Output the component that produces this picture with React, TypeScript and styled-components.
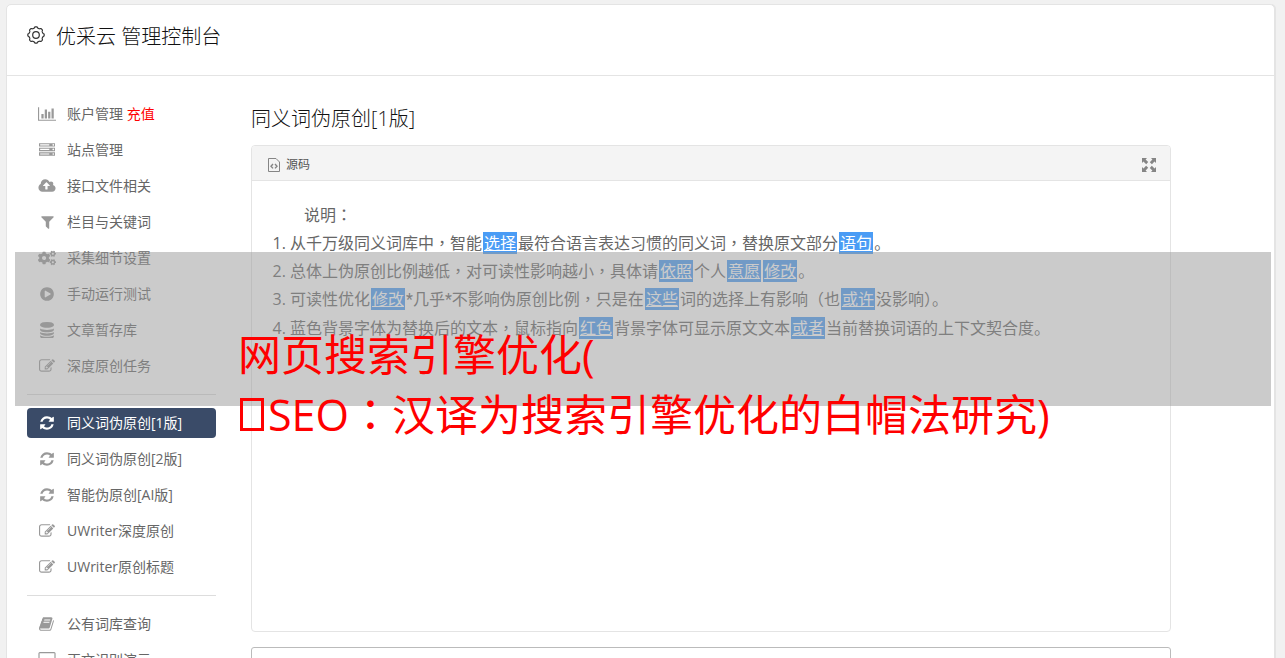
import React from 'react';
import styled, { createGlobalStyle } from 'styled-components';
import { FaCogs } from 'react-icons/fa';

const sans = '"Open Sans", "Noto Sans CJK SC", sans-serif';

const GlobalStyle = createGlobalStyle`
  * { box-sizing: border-box; }
  body {
    margin: 0;
    background: #f1f1f1;
    color: #666;
    font: 14px/30px ${sans};
  }
`;

/* ---------- icons ---------- */

const glyphs = {
  chart: {
    box: '0 0 2048 1792', width: 18,
    d: 'M640 896v512h-256v-512h256zm384-512v1024h-256v-1024h256zm1024 1152v128h-2048v-1536h128v1408h1920zm-640-896v768h-256v-768h256zm384-384v1152h-256v-1152h256z',
  },
  server: {
    box: '0 0 1792 1792', width: 16,
    d: 'M128 1408h1024v-128h-1024v128zm0-512h1024v-128h-1024v128zm1568 448q0-40-28-68t-68-28-68 28-28 68 28 68 68 28 68-28 28-68zm-1568-960h1024v-128h-1024v128zm1568 448q0-40-28-68t-68-28-68 28-28 68 28 68 68 28 68-28 28-68zm0-512q0-40-28-68t-68-28-68 28-28 68 28 68 68 28 68-28 28-68zm96 832v384h-1792v-384h1792zm0-512v384h-1792v-384h1792zm0-512v384h-1792v-384h1792z',
  },
  upload: {
    box: '-64 0 1920 1792', width: 18,
    d: 'M1216 864q0-14-9-23l-352-352q-9-9-23-9t-23 9l-351 351q-10 12-10 24 0 14 9 23t23 9h224v352q0 13 9.5 22.5t22.5 9.5h192q13 0 22.5-9.5t9.5-22.5v-352h224q13 0 22.5-9.5t9.5-22.5zm640 288q0 159-112.5 271.5t-271.5 112.5h-1088q-185 0-316.5-131.5t-131.5-316.5q0-130 70-240t188-165q-2-30-2-43 0-212 150-362t362-150q156 0 285.5 87t188.5 231q71-62 166-62 106 0 181 75t75 181q0 76-41 138 130 31 213.5 135.5t83.5 238.5z',
  },
  filter: {
    box: '0 0 1408 1792', width: 13,
    d: 'M1403 295q17 41-14 70l-493 493v742q0 42-39 59-13 5-25 5-27 0-45-19l-256-256q-19-19-19-45v-486l-493-493q-31-29-14-70 17-39 59-39h1280q42 0 59 39z',
  },
  play: {
    box: '0 0 1536 1792', width: 14,
    d: 'M768 128q209 0 385.5 103t279.5 279.5 103 385.5-103 385.5-279.5 279.5-385.5 103-385.5-103-279.5-279.5-103-385.5 103-385.5 279.5-279.5 385.5-103zm384 823q32-18 32-55t-32-55l-544-320q-31-19-64-1-32 19-32 56v640q0 37 32 56 16 8 32 8 17 0 32-9z',
  },
  database: {
    box: '0 0 1536 1792', width: 14,
    d: 'M768 896q237 0 443-43t325-127v170q0 69-103 128t-280 93.5-385 34.5-385-34.5-280-93.5-103-128v-170q119 84 325 127t443 43zm0 768q237 0 443-43t325-127v170q0 69-103 128t-280 93.5-385 34.5-385-34.5-280-93.5-103-128v-170q119 84 325 127t443 43zm0-384q237 0 443-43t325-127v170q0 69-103 128t-280 93.5-385 34.5-385-34.5-280-93.5-103-128v-170q119 84 325 127t443 43zm0-1280q208 0 385 34.5t280 93.5 103 128v128q0 69-103 128t-280 93.5-385 34.5-385-34.5-280-93.5-103-128v-128q0-69 103-128t280-93.5 385-34.5z',
  },
  edit: {
    box: '0 0 1792 1792', width: 16,
    d: 'M888 1184l116-116-152-152-116 116v56h96v96h56zm440-720q-16-16-33 1l-350 350q-17 17-1 33t33-1l350-350q17-17 1-33zm80 594v190q0 119-84.5 203.5t-203.5 84.5h-832q-119 0-203.5-84.5t-84.5-203.5v-832q0-119 84.5-203.5t203.5-84.5h832q63 0 117 25 15 7 18 23 3 17-9 29l-49 49q-14 14-32 8-23-6-45-6h-832q-66 0-113 47t-47 113v832q0 66 47 113t113 47h832q66 0 113-47t47-113v-126q0-13 9-22l64-64q15-15 35-7t20 29zm-96-738l288 288-672 672h-288v-288zm444 132l-92 92-288-288 92-92q28-28 68-28t68 28l152 152q28 28 28 68t-28 68z',
  },
  refresh: {
    box: '0 0 1536 1792', width: 14,
    d: 'M1511 1056q0 5-1 7-64 268-268 434.5t-478 166.5q-146 0-282.5-55t-243.5-157l-129 129q-19 19-45 19t-45-19-19-45v-448q0-26 19-45t45-19h448q26 0 45 19t19 45-19 45l-137 137q71 66 161 102t187 36q134 0 250-65t186-179q11-17 53-117 8-23 30-23h192q13 0 22.5 9.5t9.5 22.5zm25-800v448q0 26-19 45t-45 19h-448q-26 0-45-19t-19-45 19-45l138-138q-148-137-349-137-134 0-250 65t-186 179q-11 17-53 117-8 23-30 23h-199q-13 0-22.5-9.5t-9.5-22.5v-7q65-268 270-434.5t480-166.5q146 0 284 55.5t245 156.5l130-129q19-19 45-19t45 19 19 45z',
  },
  book: {
    box: '0 0 1792 1792', width: 16,
    d: 'M1639 478q40 57 18 129l-275 906q-19 64-76.5 107.5t-122.5 43.5h-923q-77 0-148.5-53.5t-99.5-131.5q-24-67-2-127 0-4 3-27t4-37q1-8-3-21.5t-3-19.5q2-11 8-21t16.5-23.5 16.5-23.5q23-38 45-91.5t30-91.5q3-10 .5-30t-.5-28q3-11 17-28t17-23q21-36 42-92t25-90q1-9-2.5-32t.5-28q4-13 22-30.5t22-22.5q19-26 42.5-84.5t27.5-96.5q1-8-3-25.5t-2-26.5q2-8 9-18t18-23 17-21q8-12 16.5-30.5t15-35 16-36 19.5-32 26.5-23.5 36-11.5 47.5 5.5l-1 3q38-9 51-9h761q74 0 114 56t18 130l-274 906q-36 119-71.5 153.5t-128.5 34.5h-869q-27 0-38 15-11 16-1 43 24 70 144 70h923q29 0 56-15.5t35-41.5l300-987q7-22 5-57 38 15 59 43zm-1064 2q-4 13 2 22.5t20 9.5h608q13 0 25.5-9.5t16.5-22.5l21-64q4-13-2-22.5t-20-9.5h-608q-13 0-25.5 9.5t-16.5 22.5zm-83 256q-4 13 2 22.5t20 9.5h608q13 0 25.5-9.5t16.5-22.5l21-64q4-13-2-22.5t-20-9.5h-608q-13 0-25.5 9.5t-16.5 22.5z',
  },
  desktop: {
    box: '0 0 1920 1792', width: 18,
    d: 'M1792 992v-832q0-13-9.500-22.500t-22.500-9.500h-1600q-13 0-22.500 9.500t-9.500 22.500v832q0 13 9.500 22.500t22.500 9.500h1600q13 0 22.500-9.500t9.500-22.500zm128-832v1088q0 66-47 113t-113 47h-544q0 37 16 77.500t32 71 16 43.500q0 26-19 45t-45 19h-512q-26 0-45-19t-19-45q0-14 16-44t32-70 16-78h-544q-66 0-113-47t-47-113v-1088q0-66 47-113t113-47h1600q66 0 113 47t47 113z',
  },
};

type IconName = keyof typeof glyphs | 'cogs';

function Icon({ name }: { name: IconName }) {
  if (name === 'cogs') return <FaCogs size={18} aria-hidden />;
  const { box, width, d } = glyphs[name];
  return (
    <svg viewBox={box} width={width} height={16} fill="currentColor" aria-hidden>
      <path d={d} />
    </svg>
  );
}

function gearOutline(teeth: number) {
  const points: string[] = [];
  for (let i = 0; i <= 180; i++) {
    const a = (i / 180) * Math.PI * 2;
    const r = 7.6 + 0.6 * Math.tanh(2 * Math.cos(teeth * a));
    points.push(`${(9 + r * Math.sin(a)).toFixed(2)} ${(9 - r * Math.cos(a)).toFixed(2)}`);
  }
  return `M${points.join('L')}Z`;
}

function GearIcon() {
  return (
    <svg width="18" height="18" viewBox="0 0 18 18" fill="none" stroke="#333" strokeWidth="1.2" aria-hidden>
      <path d={gearOutline(8)} />
      <circle cx="9" cy="9" r="3.3" />
    </svg>
  );
}

function SourceIcon() {
  return (
    <svg width="12" height="14" viewBox="0 0 12 14" fill="none" stroke="#858585" aria-hidden>
      <path d="M.5 .5H8L11.500 4V13.500H.5Z" />
      <path d="M5 6L3 8.200L5 10.400M7 6L9 8.200L7 10.400" strokeWidth="1.400" />
    </svg>
  );
}

function ExpandIcon() {
  return (
    <svg width="14" height="14" viewBox="0 0 14 14" fill="#858585" aria-hidden>
      {[0, 90, 180, 270].map((turn) => (
        <path key={turn} transform={`rotate(${turn} 7 7)`} d="M0 0H5L3.600 1.500L6.200 4.100L4.200 6.200L1.500 3.600L0 5Z" />
      ))}
    </svg>
  );
}

/* ---------- page frame ---------- */

const Page = styled.div`
  position: relative;
  height: 100vh;
  overflow: hidden;
  padding: 4px 10px 0 6px;
`;

const Panel = styled.div`
  background: #fff;
  border: 1px solid #e4e4e4;
  border-radius: 5px;
  box-shadow: 1px 0 0 #e4e4e4;
`;

const Header = styled.header`
  display: flex;
  align-items: center;
  gap: 11px;
  height: 71px;
  padding: 0 20px 10px;
  border-bottom: 1px solid #e4e4e4;
`;

const Heading = styled.h1`
  margin: 0;
  padding-top: 3px;
  color: #111;
  font-size: 20px;
  font-weight: 300;
  line-height: 30px;
`;

const Columns = styled.div`
  display: flex;
  gap: 35px;
  padding: 23px 103px 20px 20px;
`;

/* ---------- sidebar ---------- */

const Sidebar = styled.nav`
  flex: 0 0 189px;
`;

const Menu = styled.ul`
  display: flex;
  flex-direction: column;
  gap: 6px;
  margin: 0;
  padding: 0;
  list-style: none;

  & + & {
    margin-top: 13px;
    padding-top: 13px;
    border-top: 1px solid #ddd;
  }
`;

const MenuLink = styled.a<{ $active?: boolean }>`
  display: flex;
  align-items: center;
  gap: 11px;
  height: 30px;
  padding-left: 11px;
  border-radius: 4px;
  text-decoration: none;
  color: ${(p) => (p.$active ? '#fff' : '#666')};
  background: ${(p) => (p.$active ? '#3a4b68' : 'transparent')};
`;

const IconSlot = styled.span<{ $active?: boolean }>`
  display: flex;
  justify-content: center;
  width: 18px;
  color: ${(p) => (p.$active ? '#fff' : '#999')};
`;

const Recharge = styled.span`
  color: #f00;
`;

/* ---------- editor ---------- */

const Main = styled.main`
  flex: 1;
  min-width: 0;
`;

const Title = styled.h2`
  margin: 5px 0 11px;
  color: #111;
  font-size: 20px;
  font-weight: 300;
  line-height: 30px;
`;

const Editor = styled.section`
  border: 1px solid #e4e4e4;
  border-radius: 4px;
`;

const Toolbar = styled.div`
  display: flex;
  justify-content: space-between;
  align-items: center;
  height: 35px;
  padding: 0 14px 0 16px;
  background: #f4f4f4;
  border-bottom: 1px solid #e4e4e4;
  border-radius: 3px 3px 0 0;
`;

const ToolButton = styled.button`
  display: flex;
  align-items: center;
  gap: 6px;
  padding: 3px 0 0;
  border: 0;
  background: none;
  color: #555;
  font: 12px/16px ${sans};
`;

const Content = styled.div`
  min-height: 450px;
  padding: 20px;
  font-size: 16px;
  line-height: 28px;
`;

const Lead = styled.p`
  margin: 0;
  text-indent: 2em;
`;

const Notes = styled.ol`
  margin: 0;
  padding-left: 18px;
`;

const Swap = styled.span`
  margin: 0 1px;
  padding: 0 1px;
  background: #4a9cf5;
  color: #fff;
  text-decoration: underline;
`;

/* Full-width marks set in the middle of their square */
const CenteredMark = styled.span.attrs({ lang: 'zh-TW' })`
  font-family: "Noto Sans CJK TC", sans-serif;
  line-height: 1;
`;

const Star = styled.span`
  font-family: Roboto, sans-serif;
`;

const Output = styled.textarea`
  display: block;
  width: 100%;
  height: 200px;
  margin-top: 15px;
  padding: 10px;
  border: 1px solid #bbb;
  border-radius: 3px;
  resize: none;
`;

/* ---------- caption over the page ---------- */

const Band = styled.div`
  position: absolute;
  top: 252px;
  left: 15px;
  right: 14px;
  height: 154px;
  background: rgba(151, 151, 151, 0.5);
`;

const Caption = styled.p`
  position: absolute;
  top: 325px;
  left: 238px;
  margin: 0;
  color: #f00;
  font-size: 43px;
  line-height: 60px;
  white-space: nowrap;
`;

const MissingGlyph = styled.span`
  display: inline-block;
  width: 24px;
  height: 33px;
  margin: 0 4px 0 2px;
  border: 3px solid #f00;
`;

/* ---------- data ---------- */

type Item = { icon: IconName; label: string; note?: string; active?: boolean };

const menus: Item[][] = [
  [
    { icon: 'chart', label: '账户管理', note: '充值' },
    { icon: 'server', label: '站点管理' },
    { icon: 'upload', label: '接口文件相关' },
    { icon: 'filter', label: '栏目与关键词' },
    { icon: 'cogs', label: '采集细节设置' },
    { icon: 'play', label: '手动运行测试' },
    { icon: 'database', label: '文章暂存库' },
    { icon: 'edit', label: '深度原创任务' },
  ],
  [
    { icon: 'refresh', label: '同义词伪原创[1版]', active: true },
    { icon: 'refresh', label: '同义词伪原创[2版]' },
    { icon: 'refresh', label: '智能伪原创[AI版]' },
    { icon: 'edit', label: 'UWriter深度原创' },
    { icon: 'edit', label: 'UWriter原创标题' },
  ],
  [
    { icon: 'book', label: '公有词库查询' },
    { icon: 'desktop', label: '正文识别演示' },
  ],
];

const comma = <CenteredMark>，</CenteredMark>;
const colon = <CenteredMark>：</CenteredMark>;
const star = <Star>*</Star>;

export default function App() {
  return (
    <Page lang="zh-CN">
      <GlobalStyle />
      <Panel>
        <Header>
          <GearIcon />
          <Heading>优采云 管理控制台</Heading>
        </Header>
        <Columns>
          <Sidebar>
            {menus.map((items, i) => (
              <Menu key={i}>
                {items.map((item) => (
                  <li key={item.label}>
                    <MenuLink href="#" $active={item.active}>
                      <IconSlot $active={item.active}><Icon name={item.icon} /></IconSlot>
                      <span>
                        {item.label}
                        {item.note && <> <Recharge>{item.note}</Recharge></>}
                      </span>
                    </MenuLink>
                  </li>
                ))}
              </Menu>
            ))}
          </Sidebar>
          <Main>
            <Title>同义词伪原创[1版]</Title>
            <Editor>
              <Toolbar>
                <ToolButton type="button"><SourceIcon />源码</ToolButton>
                <ToolButton type="button" aria-label="全屏"><ExpandIcon /></ToolButton>
              </Toolbar>
              <Content>
                <Lead>说明{colon}</Lead>
                <Notes>
                  <li>从千万级同义词库中{comma}智能<Swap>选择</Swap>最符合语言表达习惯的同义词{comma}替换原文部分<Swap>语句</Swap>。</li>
                  <li>总体上伪原创比例越低{comma}对可读性影响越小{comma}具体请<Swap>依照</Swap>个人<Swap>意愿</Swap><Swap>修改</Swap>。</li>
                  <li>可读性优化<Swap>修改</Swap>{star}几乎{star}不影响伪原创比例{comma}只是在<Swap>这些</Swap>词的选择上有影响（也<Swap>或许</Swap>没影响）。</li>
                  <li>蓝色背景字体为替换后的文本{comma}鼠标指向<Swap>红色</Swap>背景字体可显示原文文本<Swap>或者</Swap>当前替换词语的上下文契合度。</li>
                </Notes>
              </Content>
            </Editor>
            <Output aria-label="输出" />
          </Main>
        </Columns>
      </Panel>
      <Band />
      <Caption>
        网页搜索引擎优化(<br />
        <MissingGlyph />SEO{colon}汉译为搜索引擎优化的白帽法研究)
      </Caption>
    </Page>
  );
}
